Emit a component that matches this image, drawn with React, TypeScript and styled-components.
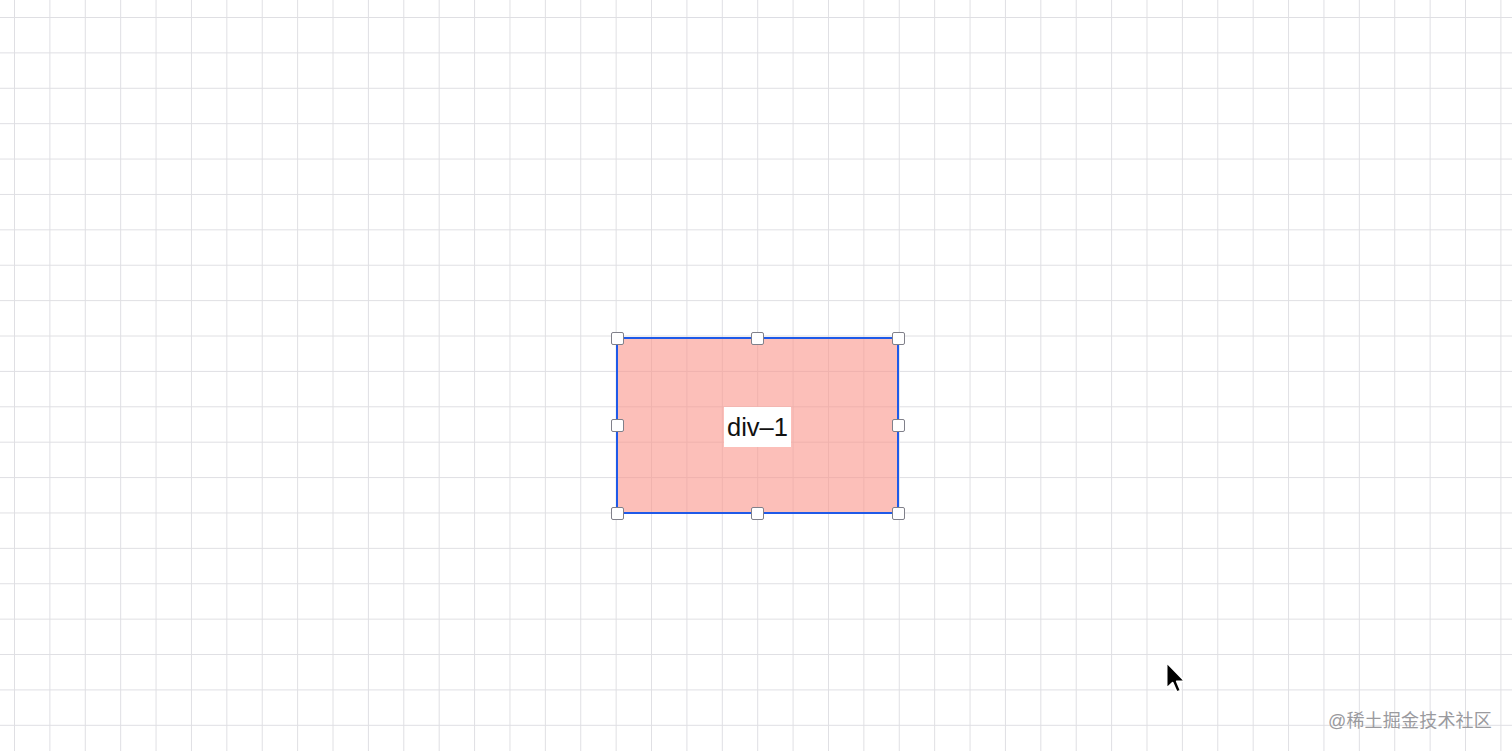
import React from 'react'
import styled, { createGlobalStyle } from 'styled-components'

const GlobalStyle = createGlobalStyle`
  html, body {
    margin: 0;
    padding: 0;
    height: 100%;
    overflow: hidden;
  }
  #root {
    height: 100%;
  }
`

const GRID = 35.4

const Canvas = styled.div`
  position: relative;
  width: 100vw;
  height: 100vh;
  background-color: #ffffff;
  background-image:
    linear-gradient(to right, #dfdfe3 1px, transparent 1px),
    linear-gradient(to bottom, #dfdfe3 1px, transparent 1px);
  background-size: ${GRID}px ${GRID}px;
  background-position: 14px 17px;
  font-family: 'Liberation Sans', Arial, sans-serif;
  overflow: hidden;
`

const Node = styled.div<{ $x: number; $y: number; $w: number; $h: number }>`
  position: absolute;
  left: ${(p) => p.$x}px;
  top: ${(p) => p.$y}px;
  width: ${(p) => p.$w}px;
  height: ${(p) => p.$h}px;
  box-sizing: border-box;
  border: 2px solid #1f5ae8;
  background: rgba(250, 148, 138, 0.6);
  display: flex;
  align-items: center;
  justify-content: center;
`

const Label = styled.span`
  background: #ffffff;
  color: #111111;
  font-size: 25.5px;
  line-height: 40px;
  padding: 0 3px;
  margin-top: 2px;
`

/* sits on the outer edge of the node border so handles centre on it */
const HandleFrame = styled.div`
  position: absolute;
  inset: -1px;
  pointer-events: none;
`

const Handle = styled.div<{ $left: string; $top: string }>`
  position: absolute;
  left: ${(p) => p.$left};
  top: ${(p) => p.$top};
  width: 13px;
  height: 13px;
  box-sizing: border-box;
  margin: -6.5px 0 0 -6.5px;
  background: #ffffff;
  border: 1px solid #80808a;
  border-radius: 2px;
`

const Cursor = styled.svg`
  position: absolute;
  left: 1163px;
  top: 660px;
`

const Watermark = styled.div`
  position: absolute;
  right: 20px;
  bottom: 19px;
  font-family: 'Liberation Sans', 'Noto Sans CJK SC', sans-serif;
  font-size: 18px;
  color: #9a9a9e;
  letter-spacing: 0.2px;
`

const handles: Array<[string, string]> = [
  ['0%', '0%'],
  ['50%', '0%'],
  ['100%', '0%'],
  ['0%', '50%'],
  ['100%', '50%'],
  ['0%', '100%'],
  ['50%', '100%'],
  ['100%', '100%'],
]

export default function App() {
  return (
    <>
      <GlobalStyle />
      <Canvas>
        <Node $x={616} $y={337} $w={283} $h={177}>
          <Label>div–1</Label>
          <HandleFrame>
            {handles.map(([l, t]) => (
              <Handle key={l + t} $left={l} $top={t} />
            ))}
          </HandleFrame>
        </Node>
        <Cursor width="26" height="38" viewBox="0 0 22 32">
          <path
            d="M3 2 L3 24 L8.2 19.2 L11.6 27.2 L15 25.8 L11.7 18 L18.6 18 Z"
            fill="#000"
            stroke="#fff"
            strokeWidth="1.6"
            strokeLinejoin="round"
          />
        </Cursor>
        <Watermark>@稀土掘金技术社区</Watermark>
      </Canvas>
    </>
  )
}
